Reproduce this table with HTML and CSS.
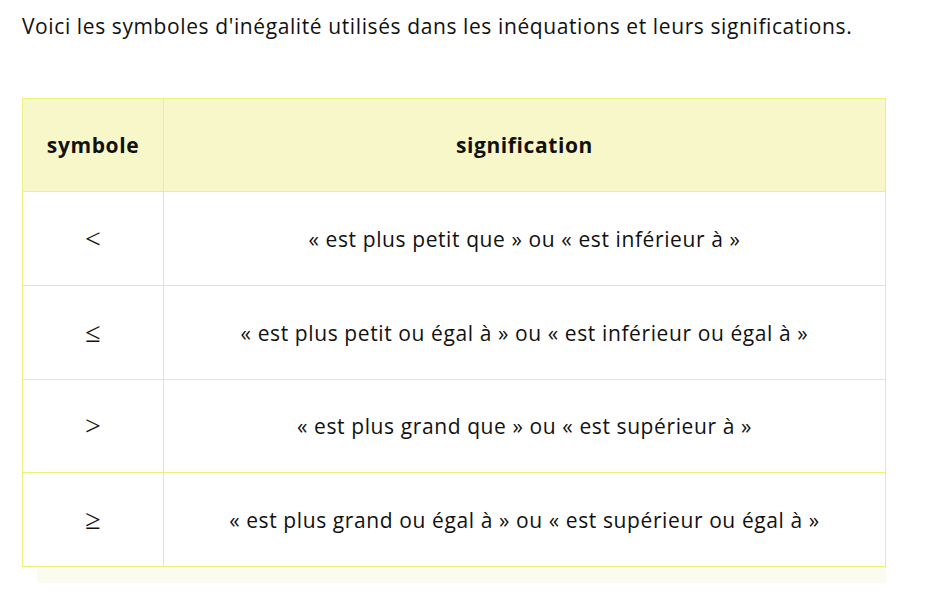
FILE: index.html
```html
<!DOCTYPE html>
<html lang="fr">
<head>
<meta charset="utf-8">
<link rel="stylesheet" href="styles.css">
</head>
<body>
<p class="intro">Voici les symboles d'inégalité utilisés dans les inéquations et leurs significations.</p>
<div class="table-wrap">
  <table class="ineq">
    <thead>
      <tr><th class="c-sym">symbole</th><th>signification</th></tr>
    </thead>
    <tbody>
      <tr><td class="sym">&lt;</td><td>« est plus petit que » ou « est inférieur à »</td></tr>
      <tr><td class="sym">≤</td><td>« est plus petit ou égal à » ou « est inférieur ou égal à »</td></tr>
      <tr><td class="sym">&gt;</td><td>« est plus grand que » ou « est supérieur à »</td></tr>
      <tr><td class="sym">≥</td><td>« est plus grand ou égal à » ou « est supérieur ou égal à »</td></tr>
    </tbody>
  </table>
  <div class="scroll-track"></div>
</div>
</body>
</html>
```
FILE: styles.css
```css
html, body { margin: 0; padding: 0; background: #fff; }
body {
  font-family: "Open Sans", "Noto Sans", sans-serif;
  color: #111;
  padding: 0 0 0 22px;
}
.intro {
  margin: 0;
  padding-top: 12px;
  font-size: 21px;
  letter-spacing: 0.6px;
  line-height: 28px;
}
.table-wrap {
  margin-top: 58px;
  width: 864px;
}
.ineq {
  border-collapse: collapse;
  width: 864px;
  font-size: 21px;
  letter-spacing: 0.6px;
}
.ineq th, .ineq td {
  border: 1px solid #e9f27c;
  text-align: center;
  vertical-align: middle;
  height: 93px;
  padding: 0;
}
.ineq th {
  height: 92px;
  background: #f8f7c9;
  font-weight: 700;
}
.ineq tbody tr:nth-child(3) td { height: 92px; }
.ineq .c-sym { width: 140px; }
.ineq td.sym {
  font-family: "Liberation Serif", serif;
  font-size: 28px;
  font-weight: 400;
  letter-spacing: 0;
}
.scroll-track {
  margin-left: 15px;
  height: 16px;
  background: #fbfbef;
}
```
